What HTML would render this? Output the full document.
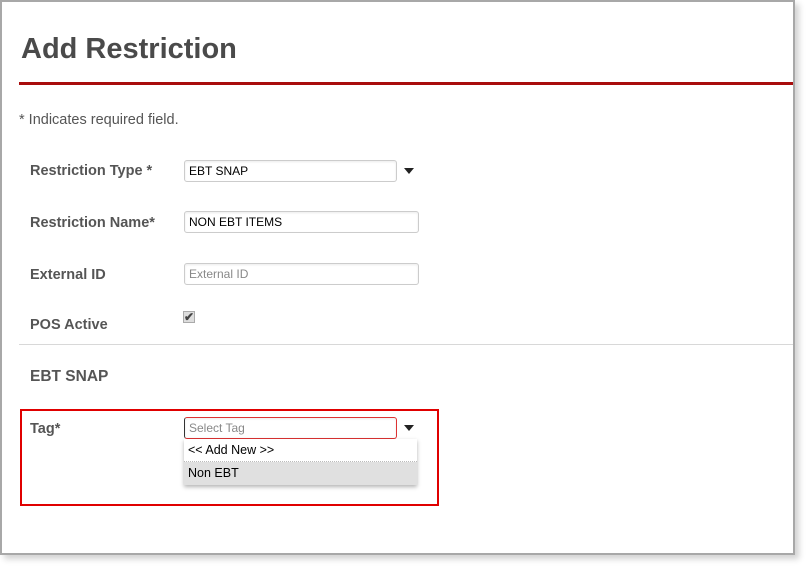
<!DOCTYPE html>
<html><head><style>
body{margin:0;width:806px;height:567px;background:#fff;font-family:"Liberation Sans",sans-serif;position:relative;overflow:hidden}
.frame{position:absolute;left:0;top:0;width:791px;height:551px;border:2px solid #a8a8a8;background:#fff;box-shadow:4px 4px 6px rgba(0,0,0,0.18)}
.a{position:absolute}
h1{position:absolute;left:21px;top:33px;margin:0;font-size:29px;font-weight:bold;color:#4a4a4a}
.lbl{position:absolute;left:30px;font-size:14.5px;font-weight:bold;color:#555}
.inp{position:absolute;left:184px;border:1px solid #ccc;border-radius:3px;font-size:12px;line-height:20px;padding-left:4px;box-sizing:border-box;height:22px;color:#000;box-shadow:inset 0 1px 2px rgba(0,0,0,.08)}
.arr{position:absolute;width:0;height:0;border-left:5px solid transparent;border-right:5px solid transparent;border-top:6px solid #222}
</style></head><body>
<div class="frame"></div>
<h1>Add Restriction</h1>
<div class="a" style="left:19px;top:82px;width:774px;height:3px;background:#a80c0c"></div>
<div class="a" style="left:19px;top:112px;font-size:14.5px;color:#555">* Indicates required field.</div>
<div class="lbl" style="top:163px">Restriction Type *</div>
<div class="inp" style="top:160px;width:213px">EBT SNAP</div>
<div class="arr" style="left:404px;top:168px"></div>
<div class="lbl" style="top:215px">Restriction Name*</div>
<div class="inp" style="top:211px;width:235px">NON EBT ITEMS</div>
<div class="lbl" style="top:267px">External ID</div>
<div class="inp" style="top:263px;width:235px;color:#888">External ID</div>
<div class="lbl" style="top:317px">POS Active</div>
<div class="a" style="left:183px;top:311px;width:12px;height:12px;background:#ddd;border:1px solid #aaa;box-sizing:border-box;font-size:12px;line-height:10px;color:#444;text-align:center;font-weight:bold">✔</div>
<div class="a" style="left:19px;top:344px;width:774px;height:1px;background:#d8d8d8"></div>
<div class="lbl" style="top:368px;font-size:15.5px">EBT SNAP</div>
<div class="a" style="left:20px;top:409px;width:419px;height:97px;border:2px solid #e00000;box-sizing:border-box"></div>
<div class="lbl" style="top:421px">Tag*</div>
<div class="inp" style="top:417px;width:213px;border-color:#d33;color:#888;border-left:1px solid #333">Select Tag</div>
<div class="arr" style="left:404px;top:425px"></div>
<div class="a" style="left:184px;top:439px;width:233px;height:46px;background:#fff;box-shadow:0 2px 4px rgba(0,0,0,.3);font-size:12.5px">
<div style="height:23px;line-height:23px;padding-left:4px;border-bottom:1px dotted #bbb;box-sizing:border-box">&lt;&lt; Add New &gt;&gt;</div>
<div style="height:23px;line-height:23px;padding-left:4px;background:#e0e0e0">Non EBT</div>
</div>
</body></html>
